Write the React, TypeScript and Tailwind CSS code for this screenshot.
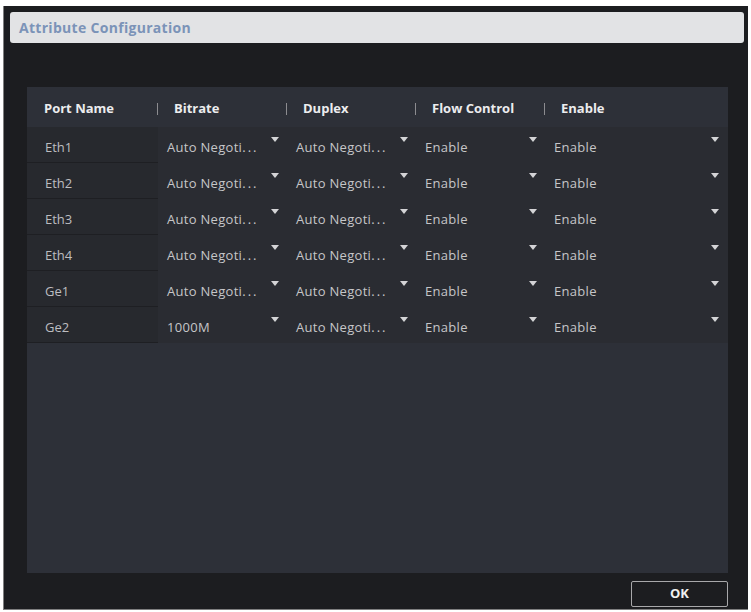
import React from "react";

type Row = { port: string; bitrate: string; duplex: string; flow: string; enable: string };

const AUTO = "Auto Negoti";

const rows: Row[] = [
  { port: "Eth1", bitrate: AUTO, duplex: AUTO, flow: "Enable", enable: "Enable" },
  { port: "Eth2", bitrate: AUTO, duplex: AUTO, flow: "Enable", enable: "Enable" },
  { port: "Eth3", bitrate: AUTO, duplex: AUTO, flow: "Enable", enable: "Enable" },
  { port: "Eth4", bitrate: AUTO, duplex: AUTO, flow: "Enable", enable: "Enable" },
  { port: "Ge1", bitrate: AUTO, duplex: AUTO, flow: "Enable", enable: "Enable" },
  { port: "Ge2", bitrate: "1000M", duplex: AUTO, flow: "Enable", enable: "Enable" },
];

const font = { fontFamily: '"Open Sans", "Noto Sans", sans-serif' };

function Caret() {
  return (
    <svg width="8" height="5" viewBox="0 0 8 5" className="mt-[10px] shrink-0">
      <polygon points="0,0 8,0 4,5" fill="#d4d4d6" />
    </svg>
  );
}

function SelectCell({ value, wide }: { value: string; wide?: boolean }) {
  const clipped = value === AUTO;
  return (
    <div className={`flex h-full justify-between pl-[9px] ${wide ? "pr-[9px]" : "pr-[8px]"}`}>
      <span className="pt-[11px] text-[13px] leading-[18px] text-[#c6c6c8] tracking-[0.3px]">
        {value}
        {clipped && <span className="tracking-[2px]">...</span>}
      </span>
      <Caret />
    </div>
  );
}

function HeadCell({ label, first }: { label: string; first?: boolean }) {
  return (
    <div className="flex items-center h-full pt-[3px]">
      {!first && <div className="w-px h-[12px] bg-[#8c8c90] -ml-px mr-[16px]" />}
      <span className={`text-[13px] font-bold text-[#ececee] ${first ? "pl-[17px]" : ""}`}>{label}</span>
    </div>
  );
}

export default function App() {
  return (
    <div className="w-[751px] h-[612px] bg-white pt-[6px] pl-[3px]" style={font}>
      <div className="w-[745px] h-[604px] bg-[#1c1d20] border-l border-b border-[#7f7f80] flex flex-col">
        <div className="mt-[6px] ml-[6px] w-[734px] h-[31px] rounded-[3px] bg-[#e2e3e5] flex items-center pl-[9px]">
          <span className="text-[14px] font-bold tracking-[0.3px] text-[#7b93b8]">Attribute Configuration</span>
        </div>

        <div className="ml-[23px] mt-[44px] w-[701px] flex flex-col">
          <div className="h-[486px] bg-[#2d3038] flex flex-col">
            <div className="grid grid-cols-[131px_129px_129px_129px_183px] h-[40px]">
              <HeadCell label="Port Name" first />
              <HeadCell label="Bitrate" />
              <HeadCell label="Duplex" />
              <HeadCell label="Flow Control" />
              <HeadCell label="Enable" />
            </div>
            {rows.map((r) => (
              <div key={r.port} className="grid grid-cols-[131px_129px_129px_129px_183px] h-[36px] bg-[#2a2c32]">
                <div className="h-full bg-[#27292e] border-b border-[#1e1f23] pl-[18px] pt-[11px] text-[13px] leading-[18px] text-[#bdbdc0]">
                  {r.port}
                </div>
                <SelectCell value={r.bitrate} />
                <SelectCell value={r.duplex} />
                <SelectCell value={r.flow} />
                <SelectCell value={r.enable} wide />
              </div>
            ))}
          </div>

          <div className="flex justify-end mt-[8px]">
            <button className="w-[97px] h-[26px] border border-[#a8a8aa] rounded-[2px] bg-[#1c1d20] text-[13px] font-bold text-[#f0f0f0]">
              OK
            </button>
          </div>
        </div>
      </div>
    </div>
  );
}
